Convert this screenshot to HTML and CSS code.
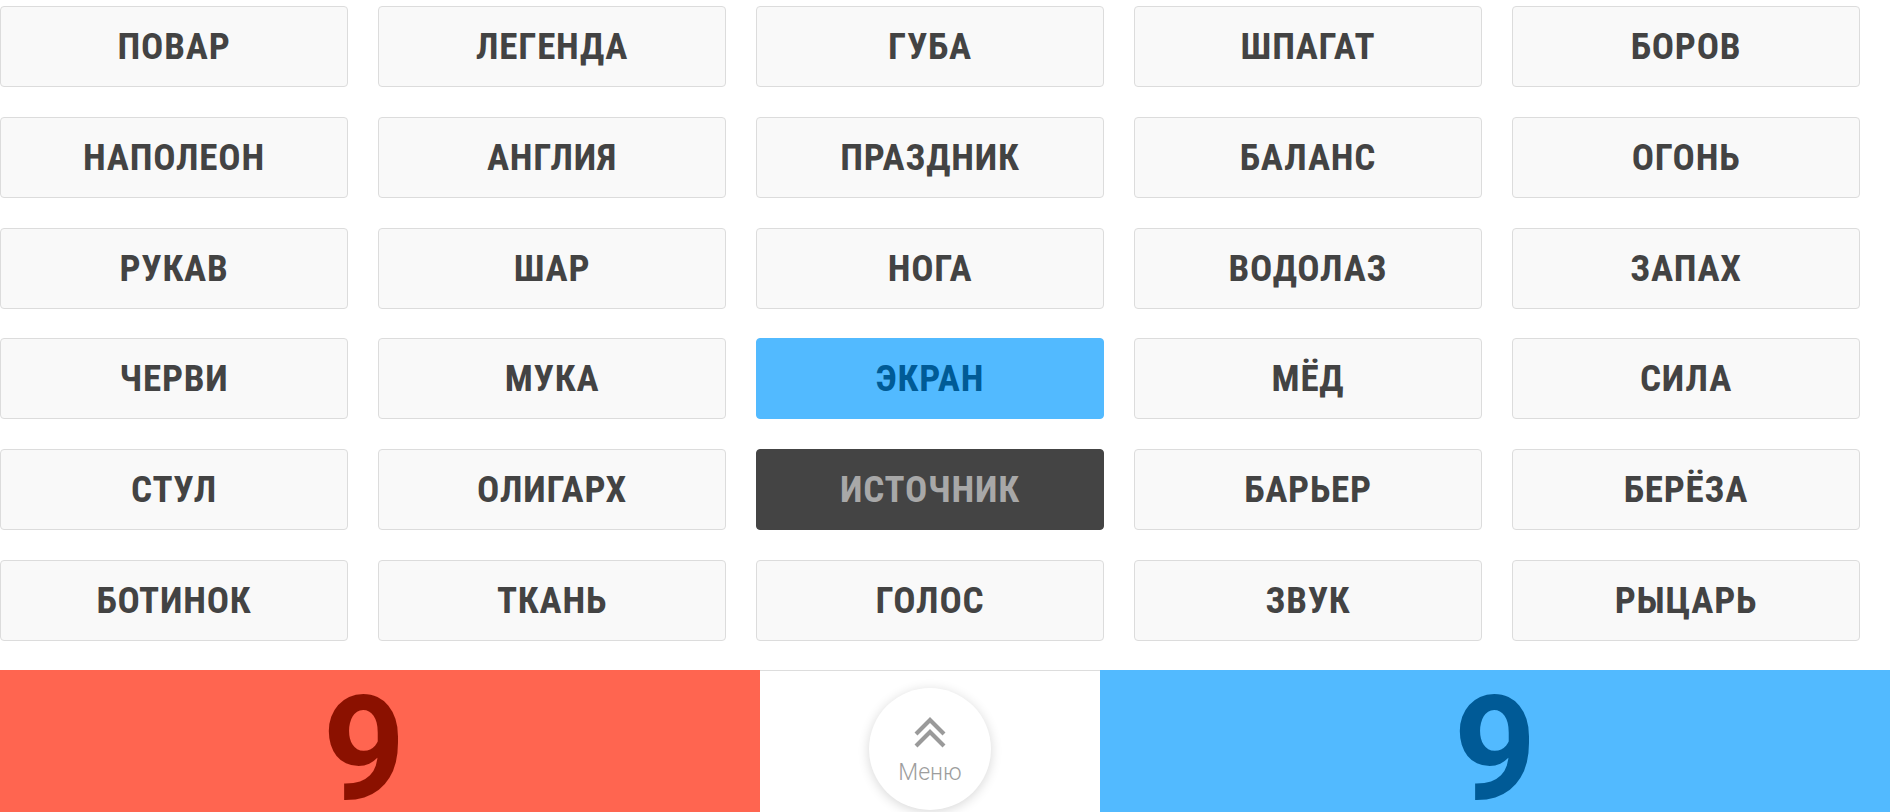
FILE: index.html
```html
<!DOCTYPE html>
<html lang="ru">
<head>
<meta charset="utf-8">
<title>Коднеймс</title>
<link rel="stylesheet" href="styles.css">
</head>
<body>
<div class="board">
  <div class="card">ПОВАР</div>
  <div class="card">ЛЕГЕНДА</div>
  <div class="card">ГУБА</div>
  <div class="card">ШПАГАТ</div>
  <div class="card">БОРОВ</div>
  <div class="card">НАПОЛЕОН</div>
  <div class="card">АНГЛИЯ</div>
  <div class="card">ПРАЗДНИК</div>
  <div class="card">БАЛАНС</div>
  <div class="card">ОГОНЬ</div>
  <div class="card">РУКАВ</div>
  <div class="card">ШАР</div>
  <div class="card">НОГА</div>
  <div class="card">ВОДОЛАЗ</div>
  <div class="card">ЗАПАХ</div>
  <div class="card">ЧЕРВИ</div>
  <div class="card">МУКА</div>
  <div class="card card-blue">ЭКРАН</div>
  <div class="card">МЁД</div>
  <div class="card">СИЛА</div>
  <div class="card">СТУЛ</div>
  <div class="card">ОЛИГАРХ</div>
  <div class="card card-dark">ИСТОЧНИК</div>
  <div class="card">БАРЬЕР</div>
  <div class="card">БЕРЁЗА</div>
  <div class="card">БОТИНОК</div>
  <div class="card">ТКАНЬ</div>
  <div class="card">ГОЛОС</div>
  <div class="card">ЗВУК</div>
  <div class="card">РЫЦАРЬ</div>
</div>
<div class="score-bar">
  <div class="team team-red"><span class="score">9</span></div>
  <div class="menu-area">
    <div class="menu-btn">
      <svg class="menu-icon" width="34" height="34" viewBox="0 0 34 34" aria-hidden="true">
        <polyline points="3,18 17,4 31,18" fill="none" stroke="#9a9a9a" stroke-width="4.2"/>
        <polyline points="3,30 17,16 31,30" fill="none" stroke="#9a9a9a" stroke-width="4.2"/>
      </svg>
      <span class="menu-label">Меню</span>
    </div>
  </div>
  <div class="team team-blue"><span class="score">9</span></div>
</div>
</body>
</html>
```
FILE: styles.css
```css
html, body {
  margin: 0;
  padding: 0;
  background: #ffffff;
  overflow: hidden;
}

body {
  width: 1890px;
  height: 812px;
  font-family: Roboto, "Noto Sans", "Liberation Sans", sans-serif;
}

.board {
  display: grid;
  grid-template-columns: repeat(5, 348px);
  grid-auto-rows: 81px;
  column-gap: 30px;
  row-gap: 29.8px;
  padding: 6px 0 0 0;
  height: 670px;
  box-sizing: border-box;
}

.card {
  box-sizing: border-box;
  background: #f9f9f9;
  border: 1px solid #dcdcdc;
  border-radius: 4px;
  display: flex;
  align-items: center;
  justify-content: center;
  color: #434343;
  font-weight: 700;
  font-size: 37px;
  font-stretch: 85%;
  letter-spacing: 0.8px;
}

.card-blue {
  background: #52baff;
  border-color: #52baff;
  color: #005b96;
}

.card-dark {
  background: #444444;
  border-color: #444444;
  color: #a8a8a8;
}

.score-bar {
  display: flex;
  height: 142px;
}

.team {
  text-align: center;
  box-sizing: border-box;
}

.team-red {
  width: 760px;
  background: #ff6550;
  color: #8b1100;
  padding-right: 32px;
}

.team-blue {
  flex: 1;
  background: #52baff;
  color: #005a96;
}

.score {
  display: block;
  padding-top: 25px;
  font-size: 144px;
  line-height: 110px;
  font-weight: 700;
  font-stretch: 95%;
}

.menu-area {
  width: 340px;
  border-top: 1px solid #dddddd;
  background: #ffffff;
  display: flex;
  justify-content: center;
  box-sizing: border-box;
}

.menu-btn {
  margin-top: 17px;
  width: 122px;
  height: 122px;
  border-radius: 50%;
  background: #ffffff;
  box-shadow: 0 2px 12px rgba(0, 0, 0, 0.16);
  display: flex;
  flex-direction: column;
  align-items: center;
  box-sizing: border-box;
  padding-top: 28px;
}

.menu-icon {
  display: block;
}

.menu-label {
  margin-top: 10px;
  font-size: 23px;
  line-height: 26px;
  font-weight: 300;
  color: #9d9d9d;
}
```
